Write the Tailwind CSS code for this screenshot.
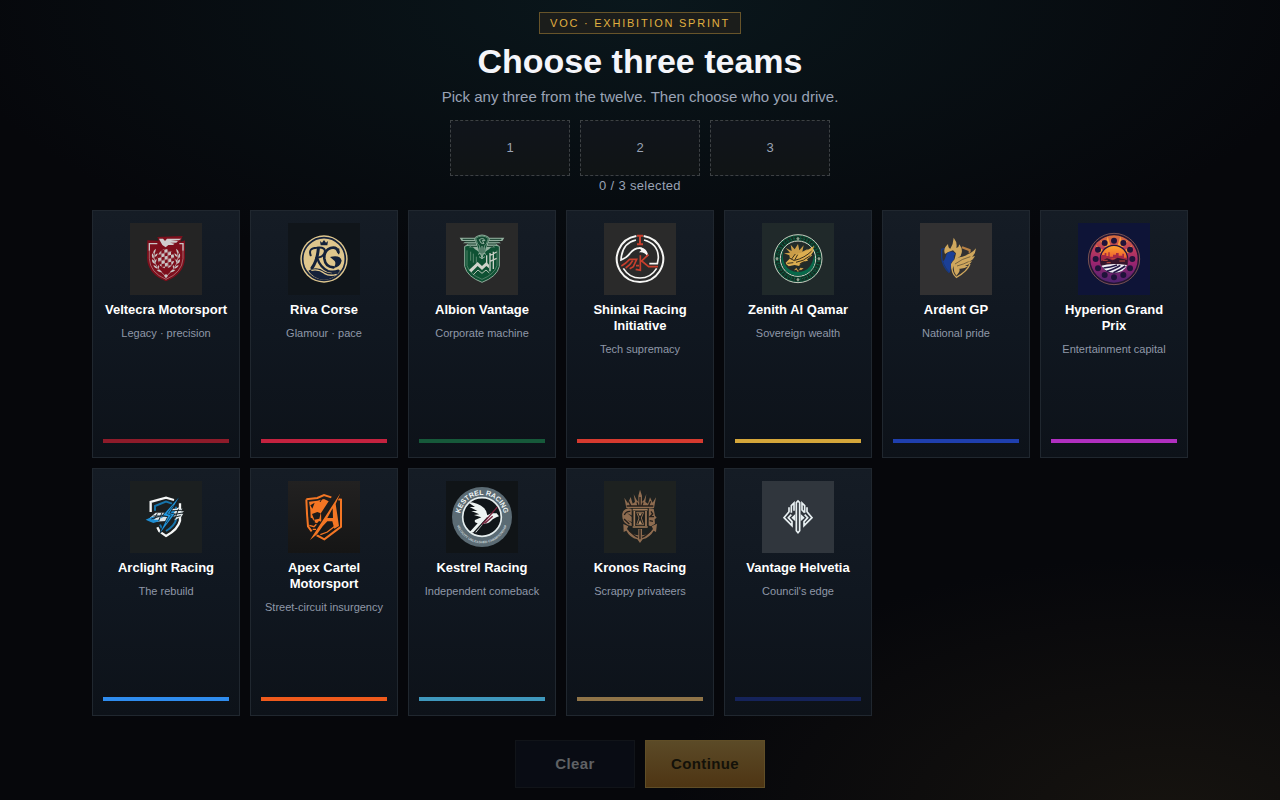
<!DOCTYPE html>
<html lang="en">
<head>
<meta charset="utf-8">
<meta name="viewport" content="width=device-width, initial-scale=1">
<title>Choose three teams</title>
<script src="https://cdn.jsdelivr.net/npm/@tailwindcss/browser@4"></script>
</head>
<body class="bg-[#06070b] font-['Liberation_Sans',Helvetica,Arial,sans-serif] text-white">
<main class="flex min-h-screen flex-col items-center bg-[radial-gradient(500px_260px_at_91%_102%,#16130f_0%,transparent_100%),radial-gradient(700px_290px_at_50%_0%,#0a171c_0%,transparent_100%)] p-3">
  <header class="flex flex-col items-center text-center">
    <p class="border border-[#67542a] bg-[#1b1d1b] px-2.5 py-0.5 text-[11px] leading-4 tracking-[0.16em] text-[#e0b040]">VOC · EXHIBITION SPRINT</p>
    <h1 class="mt-[7px] text-[34px] leading-10 font-bold text-[#f4f5fa]">Choose three teams</h1>
    <p class="mt-1.5 text-[15px] leading-5 text-[#9aa3b5]">Pick any three from the twelve. Then choose who you drive.</p>
  </header>
  <ol class="mt-[13px] flex gap-2.5 text-[13px] text-[#9aa3b5]">
    <li class="flex h-14 w-30 items-center justify-center border border-dashed border-[#3d4144] bg-linear-to-b from-[#10141b] to-[#101415]">1</li>
    <li class="flex h-14 w-30 items-center justify-center border border-dashed border-[#3d4144] bg-linear-to-b from-[#10141b] to-[#101415]">2</li>
    <li class="flex h-14 w-30 items-center justify-center border border-dashed border-[#3d4144] bg-linear-to-b from-[#10141b] to-[#101415]">3</li>
  </ol>
  <p class="text-[13px] leading-5 tracking-wide text-[#9aa3b5]">0 / 3 selected</p>

  <section aria-label="Teams" class="mt-3.5 grid w-full max-w-[1096px] flex-1 auto-rows-fr grid-cols-[repeat(auto-fill,minmax(140px,1fr))] gap-2.5">

    <button type="button" class="flex flex-col items-center border border-[#20272f] bg-linear-to-b from-[#151c25] via-[#101720] to-[#0d1219] px-2.5 pt-3 pb-3.5">
      <svg class="size-18 shrink-0 bg-[#242424]" viewBox="30 15 216 216" aria-hidden="true">
        <defs>
          <pattern id="veltecra-check" width="20" height="20" patternUnits="userSpaceOnUse" patternTransform="translate(133 95) rotate(-14) skewX(-12)"><rect width="20" height="20" fill="#7d0f1c"/><path d="M0 0h10v10H0zM10 10h10v10H10z" fill="#c9c6c6"/></pattern>
        </defs>
        <path d="M82 67 116 68 112 57 188 54 181 72 195 67 V120 Q193 168 138 190 Q83 168 81 120Z" fill="#7d0f1c"/>
        <path d="M88 98V77H112M189 98V77H178" fill="none" stroke="#c9c6c6" stroke-width="4"/>
        <path d="M88 98V122Q90 164 138 184Q186 164 189 122V98" fill="none" stroke="#b98f92" stroke-width="2"/>
        <path d="M117 62H129L135 69 141 62H184L177 67H152L174 69 169 74H150L164 77 159 81H145L137 88 127 81 119 67Z" fill="#cfcdcd"/>
        <ellipse cx="138" cy="122" rx="25" ry="29" fill="url(#veltecra-check)"/>
        <path d="M104 100Q94 140 136 174M172 100Q182 140 140 174" fill="none" stroke="#c9c6c6" stroke-width="2"/>
        <path d="M107 92q-9 7-7 15 9-5 7-15zM97 106q-4 9 3 16 4-8-3-16zM96 124q-1 10 9 14 0-10-9-14zM100 142q3 9 13 10-3-9-13-10zM110 156q6 8 16 6-6-8-16-6zM113 106q-9 3-9 11 8-2 9-11zM109 122q-6 5-4 12 6-4 4-12zM169 92q9 7 7 15-9-5-7-15zM179 106q4 9-3 16-4-8 3-16zM180 124q1 10-9 14 0-10 9-14zM176 142q-3 9-13 10 3-9 13-10zM166 156q-6 8-16 6 6-8 16-6zM163 106q9 3 9 11-8-2-9-11zM167 122q6 5 4 12-6-4-4-12zM116 141q-4 5-1 10 5-5 1-10zM160 141q4 5 1 10-5-5-1-10zM132 173l6 8 6-8-6-5z" fill="#c9c6c6"/>
      </svg>
      <span class="mt-[7px] text-[13px] leading-4 font-bold">Veltecra Motorsport</span>
      <span class="mt-[7px] text-[11px] leading-4 text-[#8f98a8]">Legacy · precision</span>
      <span class="mt-auto h-1 w-full bg-[#8e1b2a]"></span>
    </button>

    <button type="button" class="flex flex-col items-center border border-[#20272f] bg-linear-to-b from-[#151c25] via-[#101720] to-[#0d1219] px-2.5 pt-3 pb-3.5">
      <svg class="size-18 shrink-0 bg-[#10151a]" viewBox="504 15 216 216" aria-hidden="true">
        <circle cx="612" cy="123" r="71" fill="#dfc68d"/>
        <circle cx="612" cy="123" r="64" fill="none" stroke="#14213a" stroke-width="5"/>
        <path d="M600 69l6 5 6-8 6 8 6-5-2 13h-20z" fill="#14213a"/>
        <g fill="none" stroke="#14213a" stroke-linecap="round">
          <path d="M572 112Q564 90 590 89Q621 86 613 106Q607 119 589 119" stroke-width="6"/>
          <path d="M595 92Q592 128 576 150" stroke-width="9"/>
          <path d="M591 119Q601 149 624 159Q640 164 655 158" stroke-width="7"/>
          <path d="M655 102Q650 85 632 90Q611 98 613 122Q616 147 640 148" stroke-width="8"/>
          <path d="M656 93V107" stroke-width="4"/>
        </g>
        <path d="M630 117Q661 110 665 128Q661 147 640 150Q650 138 644 129ZM565 158Q590 142 615 161Q639 172 662 156Q644 185 612 185Q581 183 565 158Z" fill="#14213a"/>
        <path d="M574 157Q596 152 613 166Q629 176 650 169" fill="none" stroke="#dfc68d" stroke-width="4"/>
      </svg>
      <span class="mt-[7px] text-[13px] leading-4 font-bold">Riva Corse</span>
      <span class="mt-[7px] text-[11px] leading-4 text-[#8f98a8]">Glamour · pace</span>
      <span class="mt-auto h-1 w-full bg-[#c4223f]"></span>
    </button>

    <button type="button" class="flex flex-col items-center border border-[#20272f] bg-linear-to-b from-[#151c25] via-[#101720] to-[#0d1219] px-2.5 pt-3 pb-3.5">
      <svg class="size-18 shrink-0 bg-[#292929]" viewBox="30 15 216 216" aria-hidden="true">
        <path d="M86 85 Q111 79 118 58 Q138 44 158 58 Q165 79 190 85 V145 Q183 176 138 193 Q93 176 86 145Z" fill="#0e5133" stroke="#8fac9b" stroke-width="3"/>
        <path d="M93 97V143Q101 169 138 184Q175 169 183 143V97" fill="none" stroke="#6f947f" stroke-width="2"/>
        <path d="M71 59H116L123 78 129 101 117 94 111 88H98L106 83H88L97 76H81L91 69H77ZM205 59H160L153 78 147 101 159 94 165 88H178L170 83H188L179 76H195L185 69H199Z" fill="#93b09f"/>
        <path d="M80 64H115M86 71H118M95 78H120M104 85H123M196 64H161M190 71H158M181 78H156M172 85H153" stroke="#123a28" stroke-width="3"/>
        <path d="M119 61Q138 47 157 61L151 78 145 84 149 100 138 114 127 100 131 84 125 78Z" fill="#124b32" stroke="#93b09f" stroke-width="2"/>
        <path d="M130 65Q142 57 147 68L139 67 144 77 135 75ZM138 84V111M132 88V104M144 88V104M126 109L134 105 138 122 142 105 150 109M129 116L138 122 147 116" fill="none" stroke="#93b09f" stroke-width="3"/>
        <path d="M104 101V128M112 107V134M121 116V137" stroke="#7da38c" stroke-width="2"/>
        <path d="M152 112V137M162 105V160M172 101V153M162 112L182 102M162 130L182 121" stroke="#c9cfc6" stroke-width="4"/>
        <path d="M99 156 125 132 138 144 151 132 159 140V151L151 144 138 156 125 144 106 163Z" fill="#cfd3ca"/>
        <path d="M112 170 126 156 138 166 150 156 160 165" fill="none" stroke="#b7c3b5" stroke-width="3"/>
      </svg>
      <span class="mt-[7px] text-[13px] leading-4 font-bold">Albion Vantage</span>
      <span class="mt-[7px] text-[11px] leading-4 text-[#8f98a8]">Corporate machine</span>
      <span class="mt-auto h-1 w-full bg-[#16593a]"></span>
    </button>

    <button type="button" class="flex flex-col items-center border border-[#20272f] bg-linear-to-b from-[#151c25] via-[#101720] to-[#0d1219] px-2.5 pt-3 pb-3.5">
      <svg class="size-18 shrink-0 bg-[#2a2a2a]" viewBox="504 15 216 216" aria-hidden="true">
        <g fill="none" stroke="#f6f6f4">
          <path d="M601 54A69.500 69.500 0 1 0 623 54" stroke-width="6"/>
          <path d="M600 66Q558 75 555 126Q574 118 582 106Q597 88 616 91Q630 94 635 113" stroke-width="5"/>
          <path d="M624 66Q667 77 667 120L664 137H640M562 151Q580 180 612 180Q644 180 662 151" stroke-width="5"/>
        </g>
        <path d="M608 88Q630 88 636 116Q625 100 609 103L616 97Z" fill="#f6f6f4"/>
        <path d="M603 53H621M612 53V78M603 79H621" fill="none" stroke="#c83f2d" stroke-width="6"/>
        <path d="M556 144Q571 136 581 124H602L592 146 581 152M569 150Q584 140 590 128M600 143H609M613 112V157L599 154M637 110L617 129 638 146H666" fill="none" stroke="#c83f2d" stroke-width="5"/>
      </svg>
      <span class="mt-[7px] text-[13px] leading-4 font-bold">Shinkai Racing Initiative</span>
      <span class="mt-[7px] text-[11px] leading-4 text-[#8f98a8]">Tech supremacy</span>
      <span class="mt-auto h-1 w-full bg-[#d63a2f]"></span>
    </button>

    <button type="button" class="flex flex-col items-center border border-[#20272f] bg-linear-to-b from-[#151c25] via-[#101720] to-[#0d1219] px-2.5 pt-3 pb-3.5">
      <svg class="size-18 shrink-0 bg-[#20292a]" viewBox="30 15 216 216" aria-hidden="true">
        <circle cx="138" cy="122" r="72" fill="#0b4935" stroke="#c7cdbf" stroke-width="3"/>
        <circle cx="138" cy="122" r="62" fill="none" stroke="#15281f" stroke-width="11" stroke-dasharray="6 4"/>
        <circle cx="138" cy="122" r="61" fill="none" stroke="#167353" stroke-width="3" stroke-dasharray="3 5"/>
        <circle cx="138" cy="122" r="53" fill="#222b29" stroke="#d8d8cb" stroke-width="3"/>
        <path d="M98 88Q86 112 98 138Q112 163 140 162Q180 160 187 108Q196 150 162 168Q130 182 103 160Q76 128 98 88Z" fill="#07694a"/>
        <path d="M138 78l4 19 13-15-4 19 17-9-11 17-31 16-12-3-2-10-16-6 18-2-13-14 18 9-3-19 12 14z" fill="#c99d49"/>
        <path d="M101 134 116 119 134 108Q162 101 187 83L182 97 186 98 177 111 181 112 165 124 168 128 150 132 141 144 128 141 110 145 103 139Z" fill="#dcae50"/>
        <path d="M128 127Q158 120 179 99M132 133Q154 130 175 113M143 138L158 131M114 121L127 128M137 110L127 128M106 136L124 134M130 108L118 124" fill="none" stroke="#392f1c" stroke-width="3"/>
        <path d="M133 149 139 159 145 149 155 151 147 157 143 155 138 162 133 155 126 157Z" fill="#c99d49"/>
        <path d="M138 56l5 6-5 6-5-6zM138 179l5 6-5 6-5-6zM75 116l5 6-5 6-5-6zM201 116l5 6-5 6-5-6z" fill="#8f9d8e"/>
      </svg>
      <span class="mt-[7px] text-[13px] leading-4 font-bold">Zenith Al Qamar</span>
      <span class="mt-[7px] text-[11px] leading-4 text-[#8f98a8]">Sovereign wealth</span>
      <span class="mt-auto h-1 w-full bg-[#d4a63a]"></span>
    </button>

    <button type="button" class="flex flex-col items-center border border-[#20272f] bg-linear-to-b from-[#151c25] via-[#101720] to-[#0d1219] px-2.5 pt-3 pb-3.5">
      <svg class="size-18 shrink-0 bg-[#323132]" viewBox="504 15 216 216" aria-hidden="true">
        <path d="M580 91L569 94V119Q572 147 592 164" fill="none" stroke="#173a83" stroke-width="4"/>
        <path d="M631 85L656 94V103L650 106V99L629 91Z" fill="#b98144"/>
        <path d="M584 107Q591 98 603 101L611 107 605 113 607 123 598 134 594 164Q580 151 573 130Q580 124 584 107Z" fill="#1b3f96"/>
        <path d="M579 108Q572 92 588 78Q589 92 595 92Q604 78 605 59Q617 74 613 90Q621 88 622 79Q636 97 625 115L607 127 612 106 603 97 587 103Z" fill="#cfa75d"/>
        <path d="M597 138Q605 119 631 116Q659 107 672 91Q671 107 660 116L669 114Q664 126 650 131L660 130Q652 141 639 143L649 145Q637 153 622 152Q626 160 613 173Q603 160 605 143L600 156Z" fill="#cfa75d"/>
        <path d="M609 138Q630 122 655 116M615 144Q637 138 650 131" fill="none" stroke="#4d4231" stroke-width="2"/>
        <path d="M599 138Q598 166 613 178Q646 160 654 138" fill="none" stroke="#cfa75d" stroke-width="4"/>
      </svg>
      <span class="mt-[7px] text-[13px] leading-4 font-bold">Ardent GP</span>
      <span class="mt-[7px] text-[11px] leading-4 text-[#8f98a8]">National pride</span>
      <span class="mt-auto h-1 w-full bg-[#1f3fae]"></span>
    </button>

    <button type="button" class="flex flex-col items-center border border-[#20272f] bg-linear-to-b from-[#151c25] via-[#101720] to-[#0d1219] px-2.5 pt-3 pb-3.5">
      <svg class="size-18 shrink-0 bg-[#0e1437]" viewBox="54 15 216 216" aria-hidden="true">
        <defs>
          <linearGradient id="hyperion-ring" x1="0" y1="0" x2="0" y2="1"><stop offset="0" stop-color="#d9703c"/><stop offset=".3" stop-color="#b93a5c"/><stop offset=".6" stop-color="#97246f"/><stop offset="1" stop-color="#4c2270"/></linearGradient>
          <linearGradient id="hyperion-sun" x1="0" y1="0" x2="0" y2="1"><stop offset="0" stop-color="#ffa62f"/><stop offset=".5" stop-color="#ec5a30"/><stop offset="1" stop-color="#7b2149"/></linearGradient>
        </defs>
        <circle cx="162" cy="123" r="77" fill="#231433" stroke="#a97362" stroke-width="2"/>
        <circle cx="162" cy="123" r="71" fill="url(#hyperion-ring)"/>
        <path d="M143 55l9 29-9 4-9-2zM181 55l-9 29 9 4 9-2zM108 82l21 14-5 9-9-1zM216 82l-21 14 5 9 9-1zM120 67l12 18 9-3zM204 67l-12 18-9-3z" fill="#f79a3c"/>
        <g fill="#1f133a">
          <circle cx="162" cy="68" r="9"/><circle cx="190" cy="75" r="9"/><circle cx="210" cy="95" r="9"/><circle cx="217" cy="123" r="9"/><circle cx="210" cy="151" r="9"/><circle cx="190" cy="171" r="9"/><circle cx="162" cy="178" r="9"/><circle cx="134" cy="171" r="9"/><circle cx="114" cy="151" r="9"/><circle cx="107" cy="123" r="9"/><circle cx="114" cy="95" r="9"/><circle cx="134" cy="75" r="9"/>
        </g>
        <circle cx="162" cy="123" r="41" fill="url(#hyperion-sun)" stroke="#25143c" stroke-width="4"/>
        <path d="M123 126V111H134V105H139V114H145V103H149V116H159V110H168V105H176V113H187V107H192V119H202V135H122Z" fill="#a42945"/>
        <path d="M122 130L141 121 158 127 173 119 202 126V143H123Z" fill="#34152c"/>
        <path d="M128 127H143M154 122H166M178 129H195M140 134H152" stroke="#c04a3b" stroke-width="3"/>
        <path d="M124 143Q152 134 201 141Q193 164 162 164Q137 163 124 143Z" fill="#f0edf4"/>
        <path d="M130 150Q151 148 171 141M140 160Q166 152 181 142M160 164Q181 155 196 144" fill="none" stroke="#231746" stroke-width="5"/>
      </svg>
      <span class="mt-[7px] text-[13px] leading-4 font-bold">Hyperion Grand Prix</span>
      <span class="mt-[7px] text-[11px] leading-4 text-[#8f98a8]">Entertainment capital</span>
      <span class="mt-auto h-1 w-full bg-[#b02fc0]"></span>
    </button>

    <button type="button" class="flex flex-col items-center border border-[#20272f] bg-linear-to-b from-[#151c25] via-[#101720] to-[#0d1219] px-2.5 pt-3 pb-3.5">
      <svg class="size-18 shrink-0 bg-[#1b1f20]" viewBox="30 15 216 216" aria-hidden="true">
        <path d="M92 108V78L138 65 162 72M172 100L180 96M180 82V134Q174 160 138 180L118 166 112 154" fill="none" stroke="#f4f6f6" stroke-width="7"/>
        <path d="M105 104V90L138 77 156 83M168 92V131Q164 149 138 165M126 158L120 146" fill="none" stroke="#1773a9" stroke-width="6"/>
        <path d="M90 125 107 110H142L150 98H188L180 106H192L184 113H190L184 122 163 133 167 121 148 126 139 135 103 137 85 132Z" fill="#dfe7ea"/>
        <path d="M77 131 96 122H117L126 115 118 136 100 141 87 136ZM133 121 112 119 102 131 116 131ZM145 104H166L155 120Z" fill="#1f8ed3"/>
        <path d="M100 120H140M142 105L184 103M152 117L188 111M94 129L119 121M150 127L182 119M112 112L104 128M126 110L116 134M176 98L164 130" fill="none" stroke="#1b252a" stroke-width="3"/>
        <path d="M176 65 129 118 145 121 120 171 163 115 148 112Z" fill="#2198e0" stroke="#15242e" stroke-width="5" paint-order="stroke"/>
        <path d="M160 88L141 113 154 117 138 142" fill="none" stroke="#15242e" stroke-width="2"/>
      </svg>
      <span class="mt-[7px] text-[13px] leading-4 font-bold">Arclight Racing</span>
      <span class="mt-[7px] text-[11px] leading-4 text-[#8f98a8]">The rebuild</span>
      <span class="mt-auto h-1 w-full bg-[#2f8cee]"></span>
    </button>

    <button type="button" class="flex flex-col items-center border border-[#20272f] bg-linear-to-b from-[#151c25] via-[#101720] to-[#0d1219] px-2.5 pt-3 pb-3.5">
      <svg class="size-18 shrink-0 bg-linear-to-b from-[#222121] to-[#151515]" viewBox="504 15 216 216" aria-hidden="true">
        <path d="M559 70 592 66 612 57 634 64M654 70 663 71V152L613 190 589 177M559 70 561 112 564 151 575 166" fill="none" stroke="#f47624" stroke-width="6"/>
        <path d="M567 77 592 74 612 69 626 76 603 111 604 137 597 135 591 142 582 139 577 127 572 125 571 101Z" fill="#f47624"/>
        <path d="M571 88 584 80 577 98ZM576 114L592 108 602 112 598 128 583 131ZM605 129L611 117 612 134ZM578 137l4-7 4 11z" fill="#1d1b1a"/>
        <path d="M661 52 570 192 591 175 608 151 622 136H637L643 158 657 150 647 84Z" fill="#f47624" stroke="#1c1b1a" stroke-width="4" paint-order="stroke"/>
        <path d="M638 97 622 126H639ZM624 140 609 165 635 158Z" fill="#1c1b1a"/>
        <path d="M601 176 622 168 648 148M568 148 582 152 589 145M578 160 588 160" fill="none" stroke="#f47624" stroke-width="4"/>
        <path d="M607 66L600 78M567 116L572 146" stroke="#1c1b1a" stroke-width="3"/>
      </svg>
      <span class="mt-[7px] text-[13px] leading-4 font-bold">Apex Cartel Motorsport</span>
      <span class="mt-[7px] text-[11px] leading-4 text-[#8f98a8]">Street-circuit insurgency</span>
      <span class="mt-auto h-1 w-full bg-[#ef5a1c]"></span>
    </button>

    <button type="button" class="flex flex-col items-center border border-[#20272f] bg-linear-to-b from-[#151c25] via-[#101720] to-[#0d1219] px-2.5 pt-3 pb-3.5">
      <svg class="size-18 shrink-0 bg-[#101417]" viewBox="30 15 216 216" aria-hidden="true">
        <defs><path id="kestrel-top" d="M72 123A66 66 0 0 1 204 123"/><path id="kestrel-bottom" d="M59 123A79 79 0 0 0 217 123"/></defs>
        <circle cx="138" cy="123" r="90" fill="#5b6b74"/>
        <circle cx="138" cy="123" r="58" fill="#101519" stroke="#e6eeef" stroke-width="5"/>
        <text font-size="21" font-weight="700" fill="#f0f5f5" text-anchor="middle"><textPath href="#kestrel-top" startOffset="50%">KESTREL RACING</textPath></text>
        <text font-size="10" font-weight="700" fill="#c6d0d4" text-anchor="middle"><textPath href="#kestrel-bottom" startOffset="50%">VELOCITY UNLEASHED CHAMPIONSHIP</textPath></text>
        <path d="M96 79Q126 79 144 96Q153 105 154 118L166 112 182 112 189 121 181 124 170 130Q157 146 143 142L121 169 99 170 125 142Q113 140 117 132L136 124 114 117 130 115 106 105 124 105 101 93 117 93Z" fill="#edf3f2"/>
        <path d="M155 124L113 171" stroke="#101519" stroke-width="4"/>
        <path d="M184 93L138 146M170 121L147 142" fill="none" stroke="#75213b" stroke-width="4"/>
      </svg>
      <span class="mt-[7px] text-[13px] leading-4 font-bold">Kestrel Racing</span>
      <span class="mt-[7px] text-[11px] leading-4 text-[#8f98a8]">Independent comeback</span>
      <span class="mt-auto h-1 w-full bg-[#3f98bd]"></span>
    </button>

    <button type="button" class="flex flex-col items-center border border-[#20272f] bg-linear-to-b from-[#151c25] via-[#101720] to-[#0d1219] px-2.5 pt-3 pb-3.5">
      <svg class="size-18 shrink-0 bg-[#1d2120]" viewBox="504 15 216 216" aria-hidden="true">
        <g fill="#8e6c50">
          <path d="M565 65 576 82 584 63 590 83 597 78 593 55 602 72 607 78V59L612 41 618 59V78L624 72 631 54 628 78 636 83 642 64 650 80 660 64 654 96H571Z"/>
          <path d="M577 97Q556 101 559 123Q559 138 577 148L590 151V143L573 131 588 139V123L573 111 589 119V99ZM638 97 653 98 657 119 662 125 656 130 657 143 645 151 636 148Z"/>
          <path d="M562 144 577 151 573 159Q586 176 607 178V159H618V178Q640 176 651 159L647 151 663 143 660 168 653 164Q642 184 620 190L612 201 604 190Q581 184 571 164L563 168Z"/>
        </g>
        <path d="M587 97H638V157H587Z" fill="#1f201d"/>
        <path d="M590 101H635M590 153H635M595 105V150M630 105V150" stroke="#a07b5a" stroke-width="5"/>
        <path d="M602 109H623L616 126 623 146H602L609 126Z" fill="none" stroke="#8e6c50" stroke-width="3"/>
        <path d="M607 112H618L612 121ZM607 144 612 132 618 144Z" fill="#b08a66"/>
        <path d="M572 90H652M578 76L585 91M644 76L637 91M612 63V91M603 79L607 92M621 79L617 92M565 117Q570 105 583 106M564 129L580 144M645 106L650 114 642 122 654 122M641 134L651 136M612 160V190M580 163Q594 180 606 184M644 163Q632 179 618 184" fill="none" stroke="#241f1b" stroke-width="4"/>
      </svg>
      <span class="mt-[7px] text-[13px] leading-4 font-bold">Kronos Racing</span>
      <span class="mt-[7px] text-[11px] leading-4 text-[#8f98a8]">Scrappy privateers</span>
      <span class="mt-auto h-1 w-full bg-[#8f7448]"></span>
    </button>

    <button type="button" class="flex flex-col items-center border border-[#20272f] bg-linear-to-b from-[#151c25] via-[#101720] to-[#0d1219] px-2.5 pt-3 pb-3.5">
      <svg class="size-18 shrink-0 bg-[#30363d]" viewBox="30 15 216 216" aria-hidden="true">
        <path d="M133 164V80L138 75 143 80V164L138 170Z" fill="none" stroke="#e8f0f2" stroke-width="5"/>
        <g fill="none" stroke="#e8f0f2" stroke-width="5">
          <path d="M118 110V89L126 81V104M158 110V89L150 81V102L158 110"/>
          <path d="M111 94V107L96 125 120 149V137L109 125 118 116M165 94V107L180 125 156 149V137L167 125 158 116"/>
        </g>
        <path d="M118 125 130 114V136ZM158 125 146 114V136Z" fill="#e8f0f2"/>
      </svg>
      <span class="mt-[7px] text-[13px] leading-4 font-bold">Vantage Helvetia</span>
      <span class="mt-[7px] text-[11px] leading-4 text-[#8f98a8]">Council's edge</span>
      <span class="mt-auto h-1 w-full bg-[#15235a]"></span>
    </button>
  </section>

  <footer class="mt-6 flex gap-2.5 text-[15px] font-bold tracking-wide">
    <button type="button" disabled class="h-12 w-30 border border-[#111419] bg-[#090c14] text-[#5f6164]">Clear</button>
    <button type="button" disabled class="h-12 w-30 border border-[#604e27] bg-linear-to-b from-[#5b4a27] to-[#4e3513] text-[#131109]">Continue</button>
  </footer>
</main>
</body>
</html>
